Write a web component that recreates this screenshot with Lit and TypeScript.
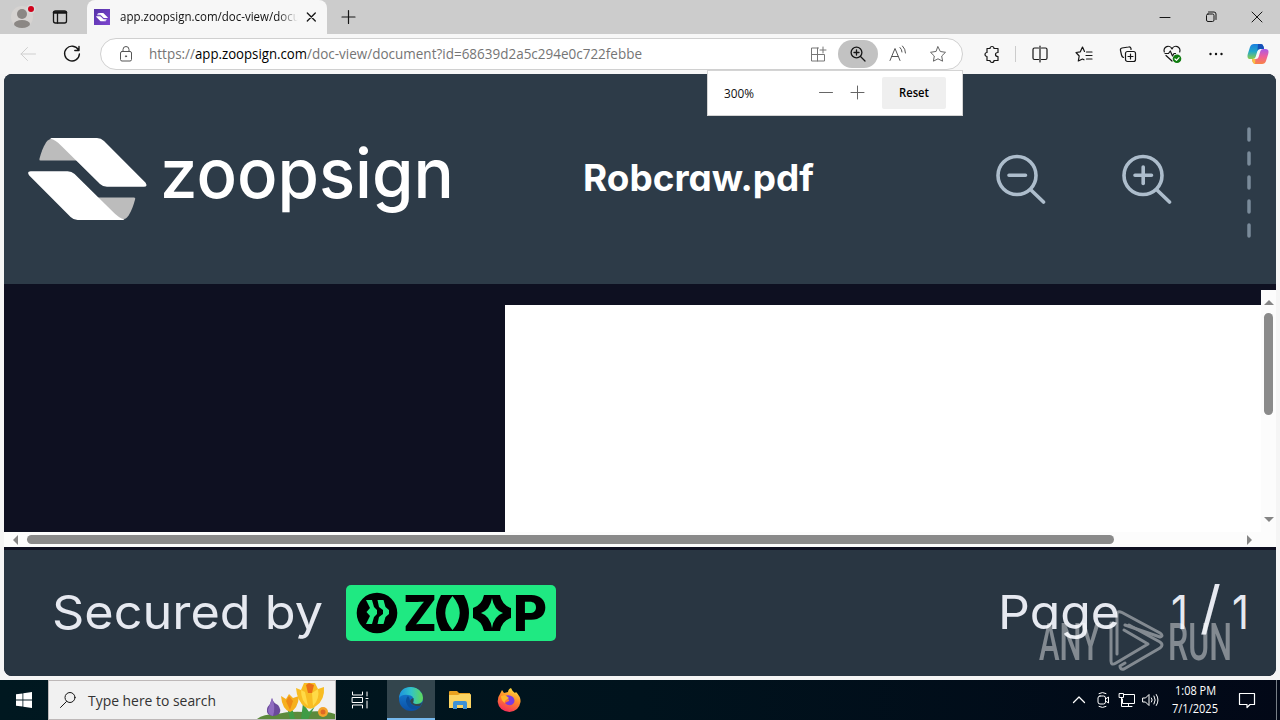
import { LitElement, html, css, svg } from "lit";
import { customElement, property } from "lit/decorators.js";

// One line of text stretched to an exact advance width.
@customElement("fit-text")
export class FitText extends LitElement {
    @property() text = "";
    @property({ type: Number }) width = 100;
    @property({ type: Number }) height = 20;
    @property({ type: Number }) base = 15;

    static styles = css`
        :host {
            display: block;
            flex: none;
        }

        svg {
            display: block;
            overflow: visible;
        }

        text {
            fill: currentColor;
            white-space: pre;
        }
    `;

    render() {
        return html`
            <svg width=${this.width} height=${this.height}>
                <text y=${this.base} textLength=${this.width} lengthAdjust="spacingAndGlyphs">${this.text}</text>
            </svg>
        `;
    }
}

// Half of the ribbon mark, the other half is the same shape turned around.
const ribbon = (grey: string) => svg`
    <path fill=${grey} d="M11.4 21C13 15 15 9 18 4.5C20 1.5 22 .5 25 .7L38 8L49 22.6H12.6Q11 22.6 11.4 21Z"/>
    <path fill="#fff" d="M23.5 0H69Q73 0 76 3L117.6 44.8Q120 48.8 116 48.8H79Q75 48.8 72 46L34 8.5Q28 2 22 .6Z"/>
`;

const mark = (grey: string) => svg`
    ${ribbon(grey)}
    <g transform="rotate(180 59.3 41)">${ribbon(grey)}</g>
`;

const magnifier = (plus: boolean) => html`
    <svg class="magnifier" width="50" height="50" viewBox="0 0 50 50">
        <circle cx="21" cy="21.5" r="19"/>
        <path d="M35 36L47.5 48M13 21.3H29.5"/>
        ${plus ? svg`<path d="M21.2 13V29.5"/>` : ""}
    </svg>
`;

const icons = {
    back: svg`<path stroke="#cfcfcf" d="M17.5 10H3M9.5 3.5L3 10L9.5 16.5"/>`,
    reload: svg`<path stroke-width="1.4" d="M16.5 6A7.4 7.4 0 1 0 17.4 10M17 2.5V6.5H12.8"/>`,
    lock: svg`<g stroke="#555"><rect x="4.5" y="7.5" width="11" height="9.5" rx="1.5"/><path d="M7 7.5V5.5A3 3 0 0 1 13 5.5V7.5"/><circle cx="10" cy="12.3" r=".6" fill="#555"/></g>`,
    apps: svg`<path stroke="#777" d="M10.5 4H3.5V17H16.5V10.5H3.5M9.5 4V17M15 3V9M12 6H18"/>`,
    zoom: svg`<g stroke-width="1.3"><circle cx="8.5" cy="8.5" r="5.4"/><path d="M12.5 12.5L17 17M6 8.5H11M8.5 6V11"/></g>`,
    aloud: svg`<path stroke="#555" d="M2 16.5L7 4.5L12 16.5M3.8 12.5H10.2M12 3.5Q14 5.5 14 8M14.5 2Q17.5 5 17.5 9"/>`,
    star: svg`<path stroke="#666" d="M10 2.8L12.3 7.5L17.5 8.3L13.7 12L14.6 17.2L10 14.8L5.4 17.2L6.3 12L2.5 8.3L7.7 7.5Z"/>`,
    puzzle: svg`<path stroke-width="1.2" d="M5 4.5H8A2 2 0 0 1 12 4.5H16V8.5Q13.5 8.5 13.5 10.5T16 12.5V16.5H12A2 2 0 0 1 8 16.5H5V12.5A2 2 0 0 1 5 8.5Z"/>`,
    split: svg`<path stroke-width="1.2" d="M8.5 4H4.5Q3 4 3 5.5V14Q3 15.5 4.5 15.5H8.5M11.5 4H15.5Q17 4 17 5.5V14Q17 15.5 15.5 15.5H11.5M10 2V18"/>`,
    favorites: svg`<path stroke-width="1.2" d="M12.5 8H18M12 11.5H18M12.5 15H18M10.5 7.5L8.5 3L6.3 7.8L2 8.5L5.2 12L4.3 17L8.5 15L10 15.8"/>`,
    collections: svg`<g stroke-width="1.2"><rect x="7.5" y="7.5" width="10" height="10" rx="2"/><path d="M12.5 10V15M10 12.5H15M5.5 13.5Q4 13 3.5 11L2.5 6.5Q2 4.5 4 4L10.5 3Q12.5 2.6 13 4.5V5.5"/></g>`,
    health: svg`<path stroke-width="1.2" d="M3 9.5H6.5L8.3 7L10.5 12L12 9.5H13.5M10 17L4 11.5M2.3 8A4 4 0 0 1 10 5A4 4 0 0 1 17.7 8"/><circle cx="15" cy="14.8" r="4.3" fill="#107c10" stroke="none"/><path stroke="#fff" stroke-width="1.2" d="M13 15L14.5 16.3L17 13.6"/>`,
    more: svg`<g fill="#111" stroke="none"><circle cx="4.5" cy="10" r="1.2"/><circle cx="10" cy="10" r="1.2"/><circle cx="15.5" cy="10" r="1.2"/></g>`,
    workspaces: svg`<rect x="3.5" y="4" width="13" height="12" rx="2" stroke-width="1.3"/><path stroke-width="2.4" d="M4 5.5H16"/><path stroke-width="1.3" d="M7.5 6V16"/>`,
    close: svg`<path stroke-width="1.3" d="M5.3 6L13.3 14M13.3 6L5.3 14"/>`,
    add: svg`<path stroke-width="1.2" d="M9.5 3.5V16.5M3 10H16"/>`,
    minimize: svg`<path d="M5 10.5H15"/>`,
    restore: svg`<rect x="5.5" y="7" width="7.5" height="7.5" rx="1.5"/><path d="M7.5 5H13Q15 5 15 7V12.5"/>`,
    exit: svg`<path d="M5 5L15 15M15 5L5 15"/>`,
};

const icon = (name: keyof typeof icons, cls = "") => html`
    <span class="btn ${cls}"><svg class="icon" width="20" height="20" viewBox="0 0 20 20">${icons[name]}</svg></span>
`;

@customElement("app-root")
export class AppRoot extends LitElement {
    static styles = css`
        :host {
            display: flex;
            flex-direction: column;
            position: relative;
            width: 1280px;
            height: 720px;
            overflow: hidden;
            background: #f5f5f5;
            color: #111;
            font: 12px "Open Sans", "Noto Sans", sans-serif;
        }

        * {
            box-sizing: border-box;
        }

        svg {
            display: block;
            flex: none;
        }

        .icon {
            fill: none;
            stroke: #161616;
            stroke-linecap: round;
            stroke-linejoin: round;
        }

        .btn {
            display: flex;
            flex: none;
            width: 44px;
            align-items: center;
            justify-content: center;
        }

        .tabs {
            display: flex;
            height: 34px;
            background: #ccc;
        }

        .profile {
            padding: 4px 0 0 10px;
            width: 41px;
        }

        .tabs .spaces {
            width: 38px;
        }

        .tab {
            display: flex;
            align-items: center;
            width: 240px;
            margin-left: 8px;
            padding-left: 7px;
            border-radius: 8px 8px 0 0;
            background: #f7f7f7;
        }

        .title {
            width: 178px;
            margin: 0 0 0 10px;
            overflow: hidden;
            mask-image: linear-gradient(90deg, #000 158px, transparent 178px);
            color: #111;
        }

        .tab .btn {
            width: 27px;
        }

        .controls {
            display: flex;
            margin-left: auto;
        }

        .controls .btn {
            width: 46px;
        }

        .toolbar {
            display: flex;
            align-items: center;
            height: 40px;
            padding-left: 6px;
            background: #f7f7f7;
        }

        .address {
            display: flex;
            align-items: center;
            width: 863px;
            height: 32px;
            margin: 0 7px 0 6px;
            padding: 0 4px 0 5px;
            border: 1px solid #d0d0d0;
            border-radius: 16px;
            background: #fff;
            color: #757575;
            font-size: 14px;
        }

        .address .btn {
            width: 40px;
            height: 28px;
        }

        .address .active {
            border-radius: 14px;
            background: #c2c2c2;
        }

        .address .spacer {
            flex: 1;
        }

        .scheme {
            margin-left: 3px;
        }

        .host {
            color: #000;
        }

        .rule {
            width: 1px;
            height: 16px;
            margin: 0 2px 0 1px;
            background: #ccc;
        }

        .copilot {
            margin-left: 9px;
        }

        .popup {
            position: absolute;
            left: 707px;
            top: 70px;
            display: flex;
            align-items: center;
            width: 256px;
            height: 46px;
            padding-left: 16px;
            border: 1px solid #d4d4d4;
            background: #fff;
        }

        .popup .btn {
            width: 32px;
        }

        .popup .btn:first-of-type {
            margin-left: 56px;
        }

        .popup .icon {
            stroke: #666;
        }

        .reset {
            width: 64px;
            height: 32px;
            margin-left: 8px;
            padding: 6px 0 0 17px;
            border-radius: 2px;
            background: #efefef;
            color: #000;
            font-weight: 600;
        }

        .page {
            height: 602px;
            margin: 0 4px;
            overflow: hidden;
            border-radius: 8px;
            background: #0e1021;
            font-family: Inter, "Open Sans", sans-serif;
            font-feature-settings: "cv11";
        }

        header {
            display: flex;
            align-items: center;
            height: 210px;
            padding-left: 24px;
            background: #2d3b48;
            color: #fff;
        }

        .wordmark {
            margin-left: 12px;
            font-size: 68px;
            font-weight: 500;
        }

        .filename {
            margin-left: 129px;
            font-size: 36.5px;
            font-weight: 700;
        }

        .magnifier {
            margin-left: 182px;
            fill: none;
            stroke: #adbdcc;
            stroke-width: 3.6;
            stroke-linecap: round;
        }

        .magnifier + .magnifier {
            margin-left: 76px;
        }

        .dashes {
            margin: 8px 0 0 75px;
            stroke: #7a8b9a;
            stroke-width: 3.5;
            stroke-linecap: round;
        }

        .viewer {
            display: grid;
            grid-template: 242px 15px / 1257px 15px;
            margin: 6px 0 3px;
        }

        .canvas {
            padding: 15px 0 0 501px;
        }

        .sheet {
            height: 227px;
            background: #fff;
        }

        .bar {
            display: flex;
            align-items: center;
            background: #fcfcfc;
            fill: #858585;
        }

        .bar.v {
            flex-direction: column;
            padding: 8px 0;
        }

        .bar.h {
            grid-column: 1 / 3;
            padding: 0 23px 0 8px;
        }

        .thumb {
            border-radius: 5px;
            background: #8a8a8a;
        }

        .v .thumb {
            width: 9px;
            height: 102px;
            margin: 7px 0 auto;
        }

        .h .thumb {
            width: 1087px;
            height: 9px;
            margin: 0 auto 0 8px;
        }

        footer {
            display: flex;
            height: 126px;
            padding-left: 48px;
            background: #293642;
            color: #e6e9f0;
            font-size: 47px;
        }

        .zoop {
            margin: 35px 0 0 23px;
            overflow: visible;
            font-weight: 800;
        }

        .label {
            margin-left: 442px;
        }

        .current {
            margin-left: 51px;
        }

        .slash {
            margin-left: 12px;
            font-size: 58px;
        }

        .total {
            margin-left: 11px;
        }

        .watermark {
            position: absolute;
            left: 1036px;
            top: 606px;
            overflow: visible;
            font-family: Roboto, "Liberation Sans", sans-serif;
            font-size: 52px;
            font-weight: 500;
            opacity: 0.42;
        }

        .taskbar {
            display: flex;
            align-items: center;
            height: 40px;
            margin-top: 4px;
            background: linear-gradient(90deg, #001820, #00131d 50%, #020817);
        }

        .start {
            margin: 0 16px;
        }

        .search {
            display: flex;
            align-items: center;
            width: 288px;
            height: 40px;
            padding-left: 11px;
            border: 1px solid #bdb8b8;
            background: #f1f1f1;
            color: #333;
            font-size: 15px;
        }

        .query {
            margin-left: 12px;
        }

        .flowers {
            margin-left: auto;
        }

        .tile {
            display: flex;
            align-items: center;
            justify-content: center;
            width: 49px;
            height: 40px;
        }

        .tile.running {
            width: 48px;
            margin-left: 2px;
            border-bottom: 2px solid #76b9ed;
            background: #33454d;
        }

        .tile .icon {
            stroke: #fff;
        }

        .tray {
            display: flex;
            align-items: center;
            gap: 4px;
            height: 40px;
            margin-left: auto;
            color: #fff;
        }

        .tray .icon {
            stroke: #fff;
        }

        .clock {
            width: 46px;
            margin: 0 15px 0 7px;
        }

        .clock fit-text:first-child {
            margin-left: 3px;
        }

        .edge {
            width: 1px;
            height: 40px;
            margin: 0 3px 0 15px;
            background: #777e86;
        }
    `;

    renderTabs() {
        return html`
            <div class="tabs">
                <div class="profile">
                    <svg width="26" height="26" viewBox="0 0 26 26">
                        <circle cx="12" cy="13" r="11" fill="#d6d3d1"/>
                        <circle cx="12" cy="10" r="5" fill="#8b8784"/>
                        <ellipse cx="12" cy="20" rx="8" ry="4" fill="#8b8784"/>
                        <circle cx="21" cy="5" r="4.5" fill="#d9d9d9"/>
                        <circle cx="21" cy="5" r="3" fill="#d0021b"/>
                    </svg>
                </div>
                ${icon("workspaces", "spaces")}
                <div class="tab">
                    <svg width="16" height="16" viewBox="0 0 16 16">
                        <defs><linearGradient id="fav" x2="1" y2="1"><stop stop-color="#5532a8"/><stop offset="1" stop-color="#7d45cf"/></linearGradient></defs>
                        <rect width="16" height="16" fill="url(#fav)"/>
                        <g transform="translate(2 4) scale(.1)">${mark("#d6c8f0")}</g>
                    </svg>
                    <div class="title"><fit-text text="app.zoopsign.com/doc-view/document" width="208" height="20" base="14"></fit-text></div>
                    ${icon("close")}
                </div>
                ${icon("add")}
                <div class="controls">${icon("minimize")}${icon("restore")}${icon("exit")}</div>
            </div>
        `;
    }

    renderToolbar() {
        return html`
            <div class="toolbar">
                ${icon("back")}${icon("reload")}
                <div class="address">
                    ${icon("lock")}
                    <fit-text class="scheme" text="https://" width="46" height="20" base="15"></fit-text>
                    <fit-text class="host" text="app.zoopsign.com" width="112" height="20" base="15"></fit-text>
                    <fit-text text="/doc-view/document?id=68639d2a5c294e0c722febbe" width="335" height="20" base="15"></fit-text>
                    <span class="spacer"></span>
                    ${icon("apps")}${icon("zoom", "active")}${icon("aloud")}${icon("star")}
                </div>
                ${icon("puzzle")}
                <span class="rule"></span>
                ${icon("split")}${icon("favorites")}${icon("collections")}${icon("health")}${icon("more")}
                <svg class="copilot" width="22" height="22" viewBox="0 0 22 22">
                    <defs>
                        <linearGradient id="cpa" x2="0" y2="1"><stop stop-color="#1b7fe0"/><stop offset=".5" stop-color="#22a7c9"/><stop offset="1" stop-color="#8fce4a"/></linearGradient>
                        <linearGradient id="cpb" x2="0" y2="1"><stop stop-color="#a85be8"/><stop offset=".5" stop-color="#ee5f9b"/><stop offset="1" stop-color="#f98345"/></linearGradient>
                    </defs>
                    <path fill="url(#cpa)" d="M7 1H14Q16 1 16.7 4L17 6H13Q11 6 10.4 8L8.6 14Q8 16 5.5 16H3.5Q-.5 16 .8 11L3 4Q4 1 7 1Z"/>
                    <path fill="#1750b8" d="M11 1H14Q16 1 16.7 4L17 6H13Q11 6 10.4 8Z"/>
                    <path fill="url(#cpb)" d="M15 21H8Q6 21 5.3 18L5 16H9Q11 16 11.6 14L13.4 8Q14 6 16.5 6H18.5Q22.5 6 21.2 11L19 18Q18 21 15 21Z"/>
                    <path fill="#f8c044" d="M5 16H8.5L8 21Q6 21 5.3 18Z"/>
                </svg>
            </div>
        `;
    }

    renderPage() {
        return html`
            <div class="page">
                <header>
                    <svg width="120" height="82" viewBox="0 0 120 82">${mark("#bcbcbc")}</svg>
                    <fit-text class="wordmark" text="zoopsign" width="294" height="82" base="59.5"></fit-text>
                    <div class="filename"><fit-text text="Robcraw.pdf" width="231" height="50" base="37"></fit-text></div>
                    ${magnifier(false)}${magnifier(true)}
                    <svg class="dashes" width="4" height="114" viewBox="0 0 4 114">
                        ${[0, 1, 2, 3, 4].map((i) => svg`<path d="M2 ${3 + i * 24}v11"/>`)}
                    </svg>
                </header>
                <div class="viewer">
                    <div class="canvas"><div class="sheet"></div></div>
                    <div class="bar v">
                        <svg width="10" height="8"><path d="M0 7L5 2L10 7Z"/></svg>
                        <div class="thumb"></div>
                        <svg width="10" height="8"><path d="M0 1L5 6L10 1Z"/></svg>
                    </div>
                    <div class="bar h">
                        <svg width="7" height="10"><path d="M6 0L1 5L6 10Z"/></svg>
                        <div class="thumb"></div>
                        <svg width="7" height="10"><path d="M1 0L6 5L1 10Z"/></svg>
                    </div>
                </div>
                <footer>
                    <fit-text text="Secured by" width="271" height="100" base="79"></fit-text>
                    <svg class="zoop" width="210" height="56" viewBox="0 0 210 56">
                        <rect width="210" height="56" rx="5" fill="#1fe982"/>
                        <circle cx="31" cy="28" r="20.3"/>
                        <g fill="#1fe982">
                            <path d="M20 15H26L28 22L31 25V29L28 32L26 39H20L24 31L20.5 27L24 23Z"/>
                            <path d="M31.5 15H37.5L39.5 22L43 25V29L39.5 32L37.5 39H31.5L33 32L37 29V25L33 22Z"/>
                        </g>
                        <text x="57" y="46" font-size="49" textLength="34" lengthAdjust="spacingAndGlyphs">Z</text>
                        <path fill-rule="evenodd" d="M95 10H118Q128 28 118 46H95Q85 28 95 10ZM106.5 11Q92 28 106.5 45Q121 28 106.5 11Z"/>
                        <path fill-rule="evenodd" d="M138 10H154Q156 20 165 23V33Q156 36 154 46H138Q136 36 127 33V23Q136 20 138 10ZM146 13Q144 25 135 28Q144 31 146 43Q148 31 157 28Q148 25 146 13Z"/>
                        <text x="167" y="46" font-size="49" textLength="34" lengthAdjust="spacingAndGlyphs">P</text>
                    </svg>
                    <fit-text class="label" text="Page" width="122" height="100" base="79"></fit-text>
                    <fit-text class="current" text="1" width="17" height="100" base="79"></fit-text>
                    <fit-text class="slash" text="/" width="21" height="100" base="78"></fit-text>
                    <fit-text class="total" text="1" width="17" height="100" base="79"></fit-text>
                </footer>
            </div>
        `;
    }

    renderTaskbar() {
        return html`
            <div class="taskbar">
                <svg class="start" width="16" height="16" viewBox="0 0 16 16" fill="#fff">
                    <path d="M0 2.3L6.5 1.4V7.6H0ZM7.3 1.3L16 0V7.6H7.3ZM0 8.4H6.5V14.6L0 13.7ZM7.3 8.4H16V16L7.3 14.7Z"/>
                </svg>
                <div class="search">
                    <svg class="icon" width="16" height="18" viewBox="0 0 16 18"><circle cx="10" cy="6.5" r="5"/><path d="M6.5 10.5L.5 16.5"/></svg>
                    <fit-text class="query" text="Type here to search" width="128" height="20" base="15.5"></fit-text>
                    <svg class="flowers" width="80" height="38" viewBox="0 0 80 38">
                        <path fill="#5c8a3c" d="M2 38Q8 33 22 33Q34 30 50 31Q68 29 80 33V38Z"/>
                        <path fill="#3f9b46" d="M35 38L31 22L38 30L40 38ZM46 38L48 22L54 31L60 25L53 38Z"/>
                        <path fill="#6b4a9c" d="M17 17Q18 22 23 24Q27 29 24 33Q18 37 13 33Q10 28 15 23Z"/>
                        <path fill="#8f6cc0" d="M17 17Q21 26 18 35Q13 34 13 29Z"/>
                        <path fill="#f6b01e" d="M26 15L31 18L34 13L38 17L44 15Q43 28 35 31Q27 28 26 15Z"/>
                        <path fill="#ee8a16" d="M31 20L34 15L38 20L35 29Z"/>
                        <path fill="#f8bd23" d="M41 7L46 9L49 2H60L63 8L69 6Q70 19 61 25Q56 30 50 26Q42 20 41 7Z"/>
                        <path fill="#ffda47" d="M46 9L50 11L53 25Q46 20 46 9ZM63 8Q65 18 58 25L57 12Z"/>
                        <path fill="#ea6f17" d="M51 4L54 2L59 4L57 12H53Z"/>
                        <circle cx="68" cy="31" r="5" fill="#f3a32b"/><circle cx="68" cy="31" r="2.5" fill="#de6924"/>
                    </svg>
                </div>
                <div class="tile">
                    <svg class="icon" width="20" height="20" viewBox="0 0 20 20"><path d="M1.5 2V5H11.5V2M1.5 18V15H11.5V18M1.5 7.5H11.5V12.5H1.5ZM16 2V6M16 11V18M15 8.5H17"/></svg>
                </div>
                <div class="tile running">
                    <svg width="24" height="24" viewBox="0 0 24 24">
                        <defs>
                            <linearGradient id="eg" x2="1"><stop stop-color="#1b91df"/><stop offset=".5" stop-color="#32c3c9"/><stop offset="1" stop-color="#60d957"/></linearGradient>
                            <linearGradient id="eb" x2="0" y2="1"><stop stop-color="#1683d8"/><stop offset="1" stop-color="#0c50a5"/></linearGradient>
                        </defs>
                        <circle cx="12" cy="12" r="12" fill="url(#eb)"/>
                        <path fill="url(#eg)" d="M0 11Q1 0 12 0Q23 1 24 11Q24 17 17 17Q13 17 14.5 14Q15 8 9 8Q3 7 0 11Z"/>
                        <path fill="#33454d" d="M14.5 14Q13 17 17 17Q21 17.5 23 15.5Q22.5 18 20.5 19.5Q13 19 11 15Q11 12 14.5 11Z"/>
                        <path fill="#0b4f9c" d="M9 9Q5 13 9 19Q12 23 17.5 22.2Q20 21 21.5 19Q12 21 11 14Q11 11 9 9Z"/>
                    </svg>
                </div>
                <div class="tile">
                    <svg width="22" height="20" viewBox="0 0 22 20">
                        <path fill="#e9a11f" d="M0 2Q0 1 1 1H8L10 3H21V8H0Z"/><path fill="#fcd462" d="M0 5H9L11 4H21Q22 4 22 5V18H0Z"/>
                        <path fill="#3e92d6" d="M4 19V13Q4 11 6 11H16Q18 11 18 13V19H14V15H8V19Z"/>
                    </svg>
                </div>
                <div class="tile">
                    <svg width="24" height="24" viewBox="0 0 24 24">
                        <defs><linearGradient id="ff" x1=".7" x2=".3" y2="1"><stop stop-color="#ffe23d"/><stop offset=".45" stop-color="#ff8a2a"/><stop offset="1" stop-color="#f5295c"/></linearGradient></defs>
                        <path fill="url(#ff)" d="M3 6L5 2L7 5L11 4Q11 1 14 0Q15 3 18 5L19 4Q24 9 23.5 14Q22 23 12.5 24Q2 23 .7 14Q.5 9 3 6Z"/>
                        <path fill="#7a3be0" d="M8 8Q12 6 16 9Q19 13 16 16Q12 19 8 15L12 13Q13 11 8 11Z"/>
                        <path fill="#ffb52a" d="M4 8L8 7L12 10L9 12Q7 13 8 15Q4 13 4 8Z"/>
                    </svg>
                </div>
                <div class="tray">
                    <svg class="icon" width="20" height="20" viewBox="0 0 20 20"><path stroke-width="1.3" d="M4.5 12.5L10 7L15.5 12.5"/></svg>
                    <svg class="icon" width="20" height="20" viewBox="0 0 20 20"><rect x="5" y="6" width="7.5" height="8" rx="2"/><path d="M12.5 9L15.5 7V13L12.5 11M6 3.5Q9.5 1.5 13 3.5M6 16.5Q9.5 18.5 13 16.5"/></svg>
                    <svg class="icon" width="20" height="20" viewBox="0 0 20 20"><path d="M6.5 4.5H17.5V13.5H5.5V9M11.5 13.5V16.5M8 16.5H15M2.5 3.5H6.5V7.5H2.5ZM4.5 7.5V16.5H8"/></svg>
                    <svg class="icon" width="20" height="20" viewBox="0 0 20 20"><path d="M2 8H4.5L8 4.5V15.5L4.5 12H2ZM10.5 8Q12 10 10.5 12M13 6Q15.5 10 13 14M15.3 4.5Q18.8 10 15.3 15.5"/></svg>
                    <div class="clock">
                        <fit-text text="1:08 PM" width="41" height="18" base="13"></fit-text>
                        <fit-text text="7/1/2025" width="46" height="18" base="13"></fit-text>
                    </div>
                    <svg class="icon" width="20" height="20" viewBox="0 0 20 20"><path stroke-width="1.2" d="M2.5 3.5H17.5V14.5H13L10 17.5V14.5H2.5Z"/></svg>
                    <span class="edge"></span>
                </div>
            </div>
        `;
    }

    render() {
        return html`
            ${this.renderTabs()} ${this.renderToolbar()} ${this.renderPage()} ${this.renderTaskbar()}
            <div class="popup">
                <fit-text text="300%" width="30" height="20" base="15"></fit-text>
                <span class="btn"><svg class="icon" width="16" height="16"><path d="M1.5 7.5H14.5"/></svg></span>
                <span class="btn"><svg class="icon" width="16" height="16"><path d="M1 7.5H14M7.5 1V14"/></svg></span>
                <div class="reset"><fit-text text="Reset" width="30" height="20" base="14"></fit-text></div>
            </div>
            <svg class="watermark" width="200" height="70" viewBox="0 0 200 70" fill="#fff">
                <text x="3" y="54" textLength="61" lengthAdjust="spacingAndGlyphs">ANY</text>
                <g fill="none" stroke="#fff" stroke-width="3" stroke-linejoin="round" stroke-linecap="round">
                    <path d="M81 48V9Q81 4 86 6.5L124 27Q128 30 124 31L89 19"/>
                    <path d="M75 17V55Q75 60 80 57L112 38L88 24"/>
                    <path d="M89 57L84 60Q84 64 88 63L124 42Q128 39 124 36L93 19"/>
                </g>
                <text x="132" y="54" textLength="64" lengthAdjust="spacingAndGlyphs">RUN</text>
            </svg>
        `;
    }
}
